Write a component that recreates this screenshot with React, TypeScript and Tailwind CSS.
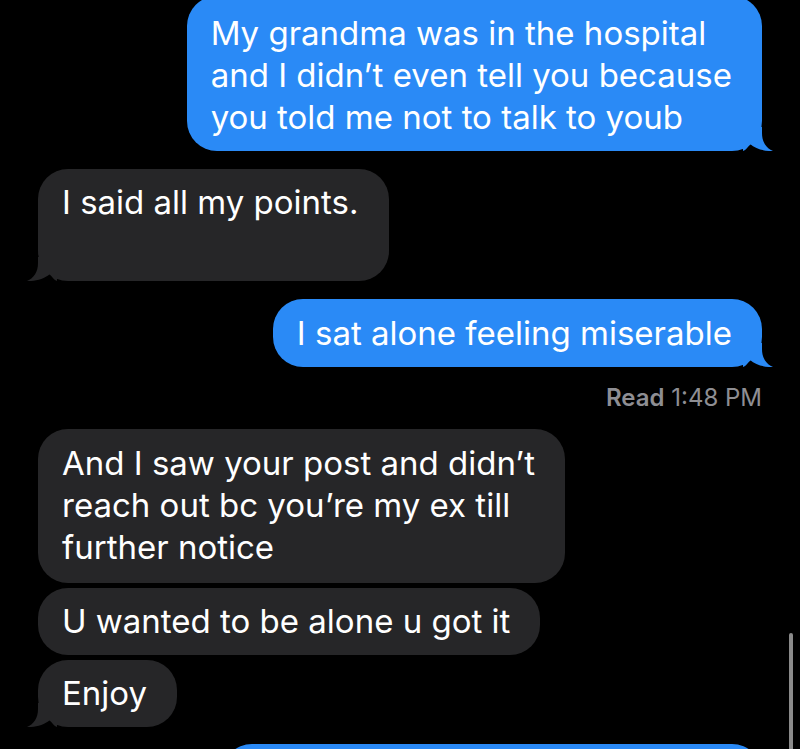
import React from 'react';

const BLUE = 'bg-[#2a8af6]';
const GRAY = 'bg-[#262628]';

function Tail({ side, fill }: { side: 'left' | 'right'; fill: string }) {
  const pos = side === 'right' ? 'right-[-11px]' : 'left-[-11px] -scale-x-100';
  return (
    <svg
      className={`absolute bottom-0 ${pos}`}
      width="30"
      height="24"
      viewBox="0 0 30 24"
    >
      <path d="M0 0 H19 V6 C19 15 23 21 30 24 C22 24.5 13 22 7 17 C5 20 3 23 0 24 Z" fill={fill} />
    </svg>
  );
}

function Sent({ children, tail = true, className = '' }: { children: React.ReactNode; tail?: boolean; className?: string }) {
  return (
    <div className={`relative self-end shrink-0 ${className}`}>
      <div className={`${BLUE} rounded-[30px] pl-6 pr-[30px] text-white`}>{children}</div>
      {tail && <Tail side="right" fill="#2a8af6" />}
    </div>
  );
}

function Received({ children, tail = false, className = '' }: { children: React.ReactNode; tail?: boolean; className?: string }) {
  return (
    <div className={`relative self-start shrink-0 ${className}`}>
      <div className={`${GRAY} rounded-[30px] pl-6 pr-[30px] text-white h-full`}>{children}</div>
      {tail && <Tail side="left" fill="#262628" />}
    </div>
  );
}

export default function App() {
  return (
    <main
      className="relative w-full h-[749px] bg-black overflow-hidden flex flex-col px-[38px] text-[33px] leading-[42px]"
      style={{ fontFamily: 'Inter, "Liberation Sans", sans-serif' }}
    >
      <Sent className="-mt-1">
        <p className="pt-[16px] pb-[13px]">
          My grandma was in the hospital
          <br />
          and I didn’t even tell you because
          <br />
          you told me not to talk to youb
        </p>
      </Sent>

      <Received tail className="mt-[18px] h-[112px]">
        <p className="pt-[12px]">I said all my points.</p>
      </Received>

      <Sent className="mt-[18px]">
        <p className="py-[13px]">I sat alone feeling miserable</p>
      </Sent>

      <div className="self-end shrink-0 mt-[17px] text-[24px] leading-[28px] text-[#8e8e93]">
        <span className="font-semibold">Read</span> 1:48 PM
      </div>

      <Received className="mt-[17px]">
        <p className="pt-[13px] pb-[15px]">
          And I saw your post and didn’t
          <br />
          reach out bc you’re my ex till
          <br />
          further notice
        </p>
      </Received>

      <Received className="mt-[5px]">
        <p className="pt-[12px] pb-[13px]">U wanted to be alone u got it</p>
      </Received>

      <Received tail className="mt-[5px]">
        <p className="pt-[12px] pb-[13px]">Enjoy</p>
      </Received>

      <div className={`${BLUE} shrink-0 mt-[17px] ml-[184px] h-[60px] rounded-[30px]`} />

      {/* scroll indicator */}
      <div className="absolute right-[7px] top-[633px] w-[4px] h-[140px] rounded-full bg-[#8a8a8a]" />
    </main>
  );
}
